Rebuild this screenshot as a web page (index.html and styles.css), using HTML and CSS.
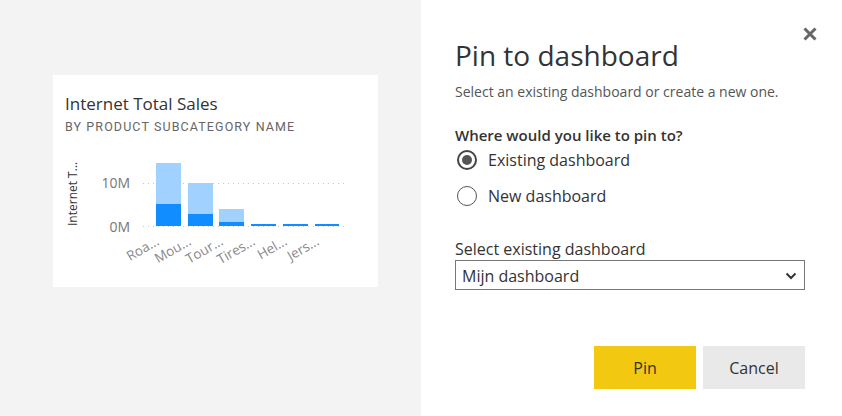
FILE: index.html
```html
<!DOCTYPE html>
<html>
<head>
<meta charset="utf-8">
<link rel="stylesheet" href="styles.css">
</head>
<body>
<div class="page">
  <div class="canvas">
    <div class="card">
      <div class="card-title">Internet Total Sales</div>
      <div class="card-sub">BY PRODUCT SUBCATEGORY NAME</div>
      <svg class="chart" width="325" height="140" viewBox="0 0 325 140">
        <g class="grid">
          <line x1="90" y1="43.5" x2="295" y2="43.5"/>
          <line x1="90" y1="86.5" x2="295" y2="86.5"/>
        </g>
        <text class="y-tick" x="77" y="48">10M</text>
        <text class="y-tick" x="77" y="92">0M</text>
        <text class="y-title" transform="translate(24,86) rotate(-90)">Internet T...</text>
        <g class="bars">
          <rect class="light" x="103" y="23" width="25" height="41"/>
          <rect class="dark" x="103" y="64" width="25" height="22"/>
          <rect class="light" x="135" y="43" width="25" height="31"/>
          <rect class="dark" x="135" y="74" width="25" height="12"/>
          <rect class="light" x="166" y="69" width="25" height="13"/>
          <rect class="dark" x="166" y="82" width="25" height="4"/>
          <rect class="dark" x="198" y="84" width="25" height="2"/>
          <rect class="dark" x="230" y="84" width="25" height="2"/>
          <rect class="dark" x="262" y="84" width="24" height="2"/>
        </g>
        <g class="x-ticks">
          <text transform="translate(107,104) rotate(-30)">Roa...</text>
          <text transform="translate(139,104) rotate(-30)">Mou...</text>
          <text transform="translate(171,104) rotate(-30)">Tour...</text>
          <text transform="translate(203,104) rotate(-30)">Tires...</text>
          <text transform="translate(235,104) rotate(-30)">Hel...</text>
          <text transform="translate(267,104) rotate(-30)">Jers...</text>
        </g>
      </svg>
    </div>
  </div>
  <div class="panel">
    <button class="close" aria-label="Close">
      <svg width="14" height="14" viewBox="0 0 14 14"><path d="M1.5 1.5 L12.5 12.5 M12.5 1.5 L1.5 12.5" stroke="#666" stroke-width="3" stroke-linecap="butt" fill="none"/></svg>
    </button>
    <h1 class="title">Pin to dashboard</h1>
    <p class="desc">Select an existing dashboard or create a new one.</p>
    <div class="question">Where would you like to pin to?</div>
    <div class="radios">
      <label class="radio"><span class="ring checked"></span>Existing dashboard</label>
      <label class="radio"><span class="ring"></span>New dashboard</label>
    </div>
    <div class="field-label">Select existing dashboard</div>
    <div class="select">
      <span>Mijn dashboard</span>
      <svg width="12" height="8" viewBox="0 0 12 8"><path d="M1.5 1.5 L6 6 L10.5 1.5" stroke="#333" stroke-width="2" fill="none"/></svg>
    </div>
    <div class="actions">
      <button class="btn pin">Pin</button>
      <button class="btn cancel">Cancel</button>
    </div>
  </div>
</div>
</body>
</html>
```
FILE: styles.css
```css
* { box-sizing: border-box; }
html, body { margin: 0; padding: 0; }
body {
  width: 842px;
  height: 416px;
  overflow: hidden;
  font-family: "Open Sans", "Noto Sans", sans-serif;
  color: #333;
}
.page {
  display: flex;
  width: 842px;
  height: 416px;
}
.canvas {
  width: 421px;
  background: #f3f3f3;
  padding: 75px 0 0 53px;
}
.card {
  width: 325px;
  height: 212px;
  background: #fff;
  padding: 18px 12px 0;
}
.card-title {
  font-size: 17px;
  line-height: 22px;
  color: #333;
}
.card-sub {
  margin-top: 4px;
  font-family: Roboto, "Liberation Sans", sans-serif;
  font-weight: 400;
  font-size: 12.5px;
  line-height: 16px;
  letter-spacing: 1.1px;
  color: #666;
}
.chart {
  display: block;
  margin: 5px 0 0 -12px;
  font-family: "Open Sans", sans-serif;
}
.grid line {
  stroke: #c8c8c8;
  stroke-width: 1;
  stroke-dasharray: 1 4;
}
.y-tick {
  font-size: 14px;
  fill: #777;
  text-anchor: end;
}
.y-title {
  font-size: 12px;
  fill: #333;
}
.light { fill: #a0d1ff; }
.dark { fill: #118dff; }
.x-ticks text {
  font-size: 13.5px;
  fill: #888;
  text-anchor: end;
}
.panel {
  position: relative;
  flex: 1;
  background: #fff;
  padding: 37px 37px 0 34px;
  display: flex;
  flex-direction: column;
}
.close {
  position: absolute;
  top: 27px;
  right: 25px;
  width: 14px;
  height: 14px;
  padding: 0;
  border: 0;
  background: none;
  display: flex;
}
.title {
  margin: 0;
  font-size: 28px;
  line-height: 36px;
  font-weight: 400;
  color: #333;
}
.desc {
  margin: 10px 0 0;
  font-size: 14px;
  line-height: 18px;
  color: #555;
}
.question {
  margin-top: 24px;
  font-size: 15px;
  line-height: 20px;
  font-weight: 600;
  color: #333;
}
.radios {
  margin-top: 1px;
  display: flex;
  flex-direction: column;
  gap: 8px;
}
.radio {
  display: flex;
  align-items: center;
  gap: 11px;
  height: 28px;
  font-size: 16px;
  color: #333;
  padding-left: 2px;
}
.ring {
  width: 20px;
  height: 20px;
  border-radius: 50%;
  border: 1.5px solid #555;
  display: flex;
  align-items: center;
  justify-content: center;
}
.ring.checked { border: 2px solid #444; }
.ring.checked::after {
  content: "";
  width: 10px;
  height: 10px;
  border-radius: 50%;
  background: #555;
}
.field-label {
  margin-top: 28px;
  font-size: 16px;
  line-height: 22px;
  color: #333;
}
.select {
  height: 30px;
  border: 1px solid #777;
  display: flex;
  align-items: center;
  justify-content: space-between;
  padding: 1px 7px 0 6px;
  font-size: 16px;
  color: #333;
}
.actions {
  margin-top: 56px;
  display: flex;
  justify-content: flex-end;
  gap: 7px;
}
.btn {
  width: 102px;
  height: 43px;
  border: 0;
  font-family: inherit;
  font-size: 16px;
  color: #333;
}
.pin { background: #f2c811; }
.cancel { background: #e9e9e9; }
```
